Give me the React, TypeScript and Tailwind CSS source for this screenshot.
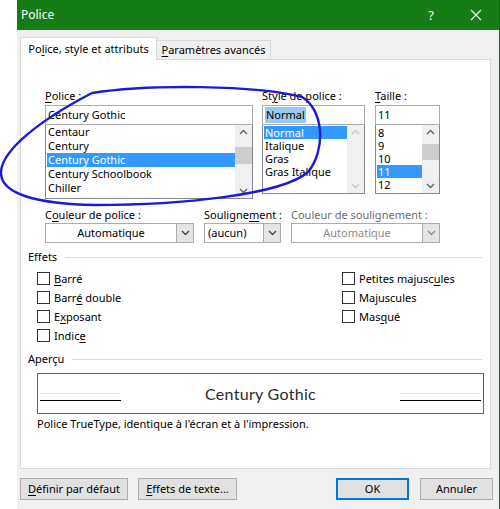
import React from "react";

const U = ({ c }: { c: string }) => <span className="underline underline-offset-[2px]">{c}</span>;

const ChevUp = ({ color = "#606060" }: { color?: string }) => (
  <svg width="9" height="6" viewBox="0 0 9 6"><path d="M1 5 L4.5 1.5 L8 5" fill="none" stroke={color} strokeWidth="1.3" /></svg>
);
const ChevDown = ({ color = "#606060" }: { color?: string }) => (
  <svg width="9" height="6" viewBox="0 0 9 6"><path d="M1 1 L4.5 4.5 L8 1" fill="none" stroke={color} strokeWidth="1.3" /></svg>
);

function Scroll({ thumbTop, thumbH, disabled }: { thumbTop?: number; thumbH?: number; disabled?: boolean }) {
  const c = disabled ? "#c8c8c8" : "#606060";
  return (
    <div className="w-[17px] h-full bg-[#f0f0f0] flex flex-col justify-between items-center relative py-[4px]">
      <ChevUp color={c} />
      {thumbH ? (
        <div className="absolute left-0 w-[17px] bg-[#cdcdcd]" style={{ top: thumbTop, height: thumbH }} />
      ) : null}
      <ChevDown color={c} />
    </div>
  );
}

function Input({ children, w }: { children: React.ReactNode; w: string }) {
  return (
    <div className={`${w} h-[20px] border border-[#abadb3] bg-white flex items-center pl-[2px]`}>{children}</div>
  );
}

function Dropdown({ w, text, disabled, center }: { w: string; text: string; disabled?: boolean; center?: boolean }) {
  return (
    <div className={`${w} h-[20px] border border-[#acacac] bg-white flex`}>
      <div className={`flex-1 flex items-center ${center ? "justify-center" : "pl-[3px]"} ${disabled ? "text-[#8a8a8a]" : "text-black"}`}>{text}</div>
      <div className="w-[17px] bg-[#e5e5e5] border-l border-[#acacac] flex items-center justify-center">
        <ChevDown color={disabled ? "#8a8a8a" : "#444"} />
      </div>
    </div>
  );
}

function Check({ children }: { children: React.ReactNode }) {
  return (
    <div className="h-[19px] flex items-center gap-[4px]">
      <div className="w-[13px] h-[13px] border border-[#333] bg-white" />
      <div>{children}</div>
    </div>
  );
}

function GroupHead({ label }: { label: React.ReactNode }) {
  return (
    <div className="h-[16px] flex items-center pl-[7px] pr-[8px]">
      <span>{label}</span>
      <div className="flex-1 h-px bg-[#dcdcdc] ml-[8px]" />
    </div>
  );
}

export default function App() {
  return (
    <div className="w-[500px] h-[509px] bg-white flex pl-[17px] relative font-['Noto_Sans',sans-serif] text-[11px] leading-[16px] text-black overflow-hidden">
      <div className="w-[483px] h-full bg-[#f0f0f0] flex flex-col border-r border-[#0f6a0f]">
        {/* title bar */}
        <div className="h-[30px] bg-[#167c16] flex items-center text-white pl-[4px] shrink-0">
          <span className="text-[12px]">Police</span>
          <div className="flex-1" />
          <span className="text-[13px] mr-[36px]">?</span>
          <svg width="12" height="12" viewBox="0 0 12 12" className="mr-[17px]">
            <path d="M1 1 L11 11 M11 1 L1 11" stroke="#dff5df" strokeWidth="1.3" />
          </svg>
        </div>
        <div className="pl-[3px] pt-[7px] flex flex-col">
          {/* tabs */}
          <div className="h-[22px] flex items-end relative z-10">
            <div className="w-[137px] h-[23px] bg-white border border-b-0 border-[#d9d9d9] flex items-center justify-center -mb-px whitespace-nowrap">
              <span>Po<U c="l" />ice, style et attributs</span>
            </div>
            <div className="w-[114px] h-[19px] bg-[#f0f0f0] border border-l-0 border-b-0 border-[#d9d9d9] flex items-center justify-center whitespace-nowrap">
              <span><U c="P" />aramètres avancés</span>
            </div>
          </div>
          {/* panel */}
          <div className="w-[471px] h-[410px] bg-white border border-[#d9d9d9] flex flex-col">
            <div className="flex pl-[24px] mt-[28px]">
              <div className="w-[208px] flex flex-col">
                <div className="h-[16px] mb-[1px]"><U c="P" />olice :</div>
                <Input w="w-[208px]">Century Gothic</Input>
                <div className="h-[74px] border border-[#828790] border-t-0 flex">
                  <div className="flex-1 flex flex-col leading-[14px] pl-[1px]">
                    <div className="h-[14px] pl-[1px]">Centaur</div>
                    <div className="h-[14px] pl-[1px]">Century</div>
                    <div className="h-[14px] pl-[1px] bg-[#3399ff] text-white">Century Gothic</div>
                    <div className="h-[14px] pl-[1px]">Century Schoolbook</div>
                    <div className="h-[14px] pl-[1px]">Chiller</div>
                  </div>
                  <Scroll thumbTop={22} thumbH={17} />
                </div>
              </div>
              <div className="w-[103px] ml-[9px] flex flex-col">
                <div className="h-[16px] mb-[1px]">St<U c="y" />le de police :</div>
                <Input w="w-[103px]"><span className="bg-[#99c9ef] px-[1px]">Normal</span></Input>
                <div className="h-[69px] border border-[#828790] border-t-0 flex">
                  <div className="flex-1 flex flex-col leading-[13px] pt-[1px] pl-[1px]">
                    <div className="h-[13px] pl-[1px] bg-[#3399ff] text-white">Normal</div>
                    <div className="h-[13px] pl-[1px]">Italique</div>
                    <div className="h-[13px] pl-[1px]">Gras</div>
                    <div className="h-[13px] pl-[1px]">Gras Italique</div>
                  </div>
                  <Scroll disabled />
                </div>
              </div>
              <div className="w-[65px] ml-[10px] flex flex-col">
                <div className="h-[16px] mb-[1px]"><U c="T" />aille :</div>
                <Input w="w-[65px]">11</Input>
                <div className="h-[69px] border border-[#828790] border-t-0 flex">
                  <div className="flex-1 flex flex-col leading-[13px] pt-[1px] pl-[1px]">
                    <div className="h-[13px] pl-[1px]">8</div>
                    <div className="h-[13px] pl-[1px]">9</div>
                    <div className="h-[13px] pl-[1px]">10</div>
                    <div className="h-[13px] pl-[1px] bg-[#3399ff] text-white">11</div>
                    <div className="h-[13px] pl-[1px]">12</div>
                  </div>
                  <Scroll thumbTop={19} thumbH={16} />
                </div>
              </div>
            </div>
            {/* row 2 */}
            <div className="flex pl-[24px] mt-[8px]">
              <div className="w-[149px] flex flex-col">
                <div className="h-[16px]">C<U c="o" />uleur de police :</div>
                <Dropdown w="w-[149px]" text="Automatique" center />
              </div>
              <div className="w-[77px] ml-[10px] flex flex-col">
                <div className="h-[16px] whitespace-nowrap">Souligne<U c="m" />ent :</div>
                <Dropdown w="w-[77px]" text="(aucun)" />
              </div>
              <div className="w-[149px] ml-[10px] flex flex-col">
                <div className="h-[16px] text-[#6d6d6d] whitespace-nowrap">Couleur de soulignement :</div>
                <Dropdown w="w-[149px]" text="Automatique" center disabled />
              </div>
            </div>
            {/* effets */}
            <div className="mt-[6px]">
              <GroupHead label="Effets" />
            </div>
            <div className="flex pl-[16px] mt-[4px]">
              <div className="w-[305px] flex flex-col">
                <Check><U c="B" />arré</Check>
                <Check>Barr<U c="é" /> double</Check>
                <Check>E<U c="x" />posant</Check>
                <Check>Indic<U c="e" /></Check>
              </div>
              <div className="flex flex-col">
                <Check>Petites majusc<U c="u" />les</Check>
                <Check>Ma<U c="j" />uscules</Check>
                <Check>Mas<U c="q" />ué</Check>
              </div>
            </div>
            <div className="mt-[6px]">
              <GroupHead label="Aperçu" />
            </div>
            <div className="ml-[16px] mt-[6px] w-[447px] h-[41px] border border-[#646464] flex items-center px-[2px]">
              <div className="w-[81px] h-[8px] self-end mb-[12px] flex flex-col justify-between">
                <div className="h-px bg-[#e6e6e6]" />
                <div className="h-px bg-black" />
              </div>
              <div className="flex-1 text-center text-[16px] leading-[18px] tracking-[0.3px] text-[#2a2a2a] font-normal font-['Lato',sans-serif]">Century Gothic</div>
              <div className="w-[81px] h-[8px] self-end mb-[12px] flex flex-col justify-between">
                <div className="h-px bg-[#e6e6e6]" />
                <div className="h-px bg-black" />
              </div>
            </div>
            <div className="ml-[16px] mt-[2px] h-[16px]">Police TrueType, identique à l'écran et à l'impression.</div>
          </div>
          {/* buttons */}
          <div className="flex mt-[9px] h-[22px]">
            <div className="w-[108px] h-[22px] bg-[#e1e1e1] border border-[#adadad] flex items-center justify-center">
              <span><U c="D" />éfinir par défaut</span>
            </div>
            <div className="w-[99px] ml-[10px] h-[22px] bg-[#e1e1e1] border border-[#adadad] flex items-center justify-center">
              <span><U c="E" />ffets de texte...</span>
            </div>
            <div className="flex-1" />
            <div className="w-[73px] h-[22px] bg-[#e1e1e1] border-2 border-[#0078d7] flex items-center justify-center">OK</div>
            <div className="w-[73px] ml-[11px] mr-[6px] h-[22px] bg-[#e1e1e1] border border-[#adadad] flex items-center justify-center">Annuler</div>
          </div>
        </div>
      </div>
      {/* hand-drawn ellipse annotation */}
      <svg className="absolute left-0 top-0 pointer-events-none" width="500" height="509" viewBox="0 0 500 509">
        <path
          d="M92 93 C150 84 255 85 302 97 C324 110 326 150 308 172 C282 195 180 205 95 205 C40 204 0 195 1 172 C2 150 40 120 92 93"
          fill="none"
          stroke="#1b1bd6"
          strokeWidth="2.4"
        />
      </svg>
    </div>
  );
}
